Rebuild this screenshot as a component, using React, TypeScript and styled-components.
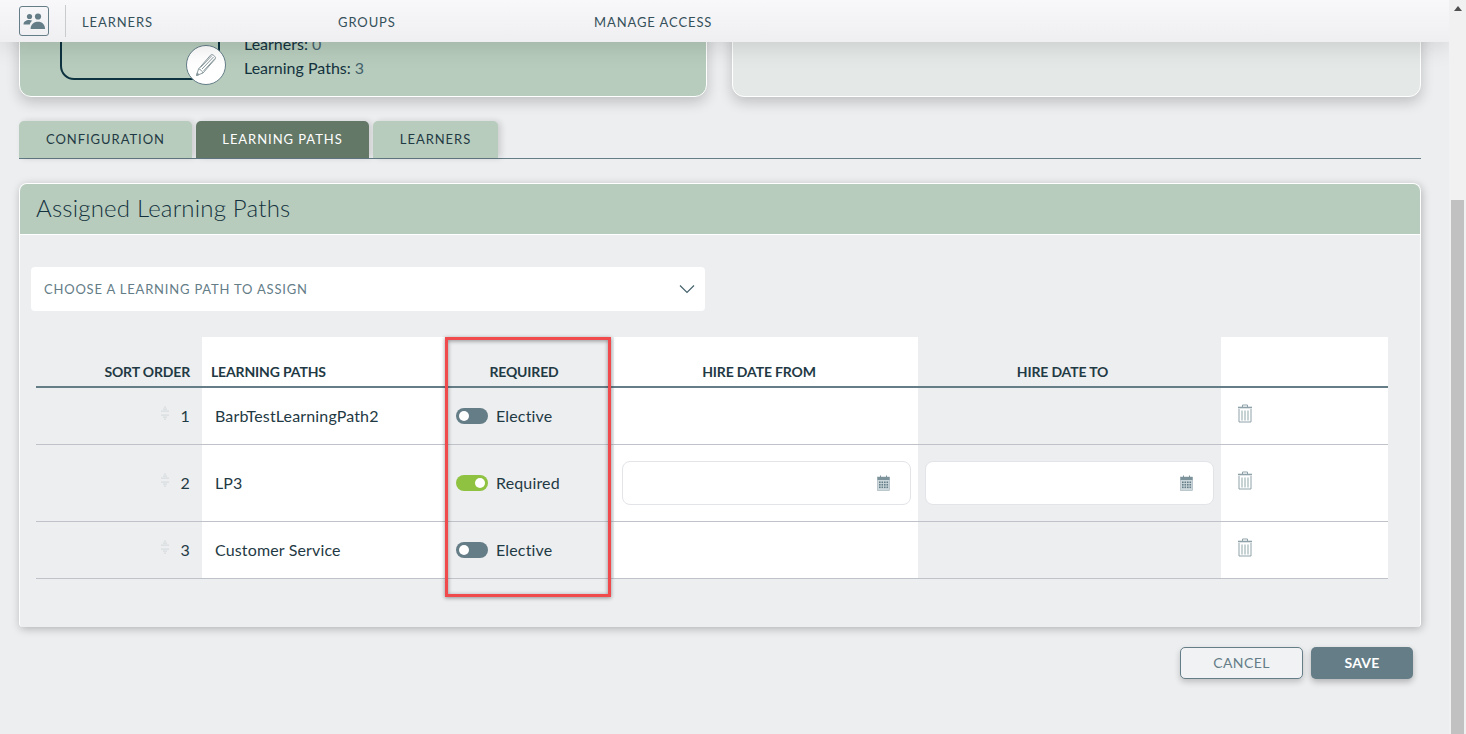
import * as React from 'react';
import styled, { createGlobalStyle } from 'styled-components';

const rows = [
  { id: 1, name: 'BarbTestLearningPath2', required: false },
  { id: 2, name: 'LP3', required: true },
  { id: 3, name: 'Customer Service', required: false },
];

function PeopleIcon() {
  return (
    <svg width="22" height="17" viewBox="0 0 22 17" fill="#647d87">
      <circle cx="6.5" cy="3.5" r="2.6" />
      <circle cx="15" cy="3.5" r="3.1" />
      <path d="M0.5 11.5c0-3 2.6-4.6 5.6-4.6 1.2 0 2.3.3 3.2.8-1.4 1-2.2 2.2-2.5 3.8z" />
      <path d="M7.6 16c0-4.6 3.2-7.2 7.4-7.2s7 2.6 7 7.2z" />
    </svg>
  );
}

function PencilIcon() {
  return (
    <svg width="22" height="24" viewBox="0 0 22 24" fill="none" stroke="#8a9a9f" strokeWidth="1">
      <path d="M1.5 22.5l2-6.5L15.5 2.2c.8-.9 1.9-.9 2.8-.1l1.5 1.3c.9.8 1 1.9.2 2.8L8 20z" />
      <path d="M3.5 16c1.8.2 3.5 1.7 4.5 4" />
      <path d="M5.5 14.5L17 2.5M7 16l11.5-12M8.5 18L20 5.5" />
      <path d="M1.5 22.5l2.5-.8-1.7-1.8z" fill="#8a9a9f" />
    </svg>
  );
}

function CalendarIcon() {
  return (
    <svg width="13" height="16" viewBox="0 0 13 16">
      <rect x="0.5" y="2" width="12" height="13.5" fill="#cdd8dc" stroke="#9fb0b6" strokeWidth="0.6" />
      <rect x="0.5" y="2" width="12" height="3" fill="#7d939c" />
      <rect x="3" y="0.5" width="1" height="3.5" fill="#7d939c" />
      <rect x="9" y="0.5" width="1" height="3.5" fill="#7d939c" />
      {[6.5, 9, 11.5].map(y =>
        [2, 4.5, 7, 9.5].map(x => (
          <rect key={`${x}-${y}`} x={x} y={y} width="1.6" height="1.6" fill="#647d87" />
        )),
      )}
    </svg>
  );
}

function TrashIcon() {
  return (
    <svg width="16" height="19" viewBox="0 0 16 19" fill="none" stroke="#8fa2a9">
      <path d="M5.5 3V1h5v2" />
      <path d="M1 3.5h14" strokeWidth="1.6" />
      <path d="M2 5v13h12V5" />
      <path d="M5 6.5v10M8 6.5v10M11 6.5v10" strokeWidth="1.5" stroke="#b5c3c8" />
    </svg>
  );
}

function DragIcon() {
  const dots = [
    [4, 1], [3, 3], [5, 3], [1, 5], [3, 5], [5, 5], [7, 5],
    [1, 9], [3, 9], [5, 9], [7, 9], [3, 11], [5, 11], [4, 13],
  ];
  return (
    <svg width="8" height="15" viewBox="0 0 8 15" fill="#b3bfc4">
      {dots.map(([x, y]) => (
        <circle key={`${x}-${y}`} cx={x} cy={y} r="0.6" />
      ))}
    </svg>
  );
}

function ChevronIcon() {
  return (
    <svg width="16" height="10" viewBox="0 0 16 10" fill="none" stroke="#46626c" strokeWidth="1.2">
      <path d="M1 1.5l7 7 7-7" />
    </svg>
  );
}

export default function App() {
  return (
    <>
      <GlobalStyle />
      <Shell>
        <Page>
          <Header>
            <IconBox>
              <PeopleIcon />
            </IconBox>
            <HeaderDivider />
            <NavItem>LEARNERS</NavItem>
            <NavItem>GROUPS</NavItem>
            <NavItem>MANAGE ACCESS</NavItem>
          </Header>
          <Main>
            <TopRow>
              <TopCard>
                <ImageFrame>
                  <EditBadge>
                    <PencilIcon />
                  </EditBadge>
                </ImageFrame>
                <Stats>
                  <StatLine>
                    Learners: <StatValue>0</StatValue>
                  </StatLine>
                  <StatLine>
                    Learning Paths: <StatValue>3</StatValue>
                  </StatLine>
                </Stats>
              </TopCard>
              <TopCard $muted />
            </TopRow>

            <Tabs>
              <Tab $width={173}>CONFIGURATION</Tab>
              <Tab $width={173} $active>
                LEARNING PATHS
              </Tab>
              <Tab $width={125}>LEARNERS</Tab>
            </Tabs>

            <Panel>
              <PanelHeader>Assigned Learning Paths</PanelHeader>
              <PanelBody>
                <SelectBox>
                  <span>CHOOSE A LEARNING PATH TO ASSIGN</span>
                  <ChevronIcon />
                </SelectBox>

                <TableWrap>
                  <Table>
                    <colgroup>
                      <col style={{ width: 166 }} />
                      <col style={{ width: 244 }} />
                      <col style={{ width: 168 }} />
                      <col style={{ width: 304 }} />
                      <col style={{ width: 303 }} />
                      <col style={{ width: 167 }} />
                    </colgroup>
                    <thead>
                      <tr>
                        <HeadCell $align="right">SORT ORDER</HeadCell>
                        <HeadCell $align="left">LEARNING PATHS</HeadCell>
                        <HeadCell $align="center" $pad={12}>
                          REQUIRED
                        </HeadCell>
                        <HeadCell $align="center">HIRE DATE FROM</HeadCell>
                        <HeadCell $align="center">HIRE DATE TO</HeadCell>
                        <HeadCell $align="left" />
                      </tr>
                    </thead>
                    <tbody>
                      {rows.map(row => (
                        <BodyRow key={row.id} $tall={row.required}>
                          <td>
                            <SortCell>
                              <DragIcon />
                              <CellText>{row.id}</CellText>
                            </SortCell>
                          </td>
                          <NameCell>
                            <CellText>{row.name}</CellText>
                          </NameCell>
                          <td>
                            <ToggleWrap>
                              <ToggleTrack $on={row.required}>
                                <ToggleKnob />
                              </ToggleTrack>
                              <CellText>{row.required ? 'Required' : 'Elective'}</CellText>
                            </ToggleWrap>
                          </td>
                          <DateCell>
                            {row.required && (
                              <DateInput>
                                <CalendarIcon />
                              </DateInput>
                            )}
                          </DateCell>
                          <DateCell $right>
                            {row.required && (
                              <DateInput>
                                <CalendarIcon />
                              </DateInput>
                            )}
                          </DateCell>
                          <ActionCell>
                            <TrashIcon />
                          </ActionCell>
                        </BodyRow>
                      ))}
                    </tbody>
                  </Table>
                  <Callout />
                </TableWrap>
              </PanelBody>
            </Panel>

            <Actions>
              <CancelButton>CANCEL</CancelButton>
              <SaveButton>SAVE</SaveButton>
            </Actions>
          </Main>
        </Page>
        <Scrollbar>
          <ScrollArrow />
          <ScrollThumb />
        </Scrollbar>
      </Shell>
    </>
  );
}

const GlobalStyle = createGlobalStyle`
  html, body {
    margin: 0;
    height: 100%;
    overflow: hidden;
    background: #edeef0;
    font-family: Lato, "Liberation Sans", sans-serif;
    color: #1f3a44;
  }
`;

const Shell = styled.div`
  display: flex;
  height: 734px;
  width: 1466px;
  overflow: hidden;
`;

const Page = styled.div`
  position: relative;
  width: 1449px;
  height: 734px;
  overflow: hidden;
`;

const Header = styled.header`
  position: absolute;
  top: 0;
  left: 0;
  right: 0;
  z-index: 5;
  height: 42px;
  display: flex;
  align-items: center;
  padding-left: 19px;
  box-sizing: border-box;
  background: linear-gradient(#f8f8fa, #efeff1);
  box-shadow: 0 4px 24px rgba(0, 0, 0, 0.12);
`;

const IconBox = styled.div`
  width: 30px;
  height: 30px;
  box-sizing: border-box;
  display: flex;
  align-items: center;
  justify-content: center;
  border: 1px solid #647d87;
  border-radius: 3px;
`;

const HeaderDivider = styled.div`
  width: 1px;
  height: 32px;
  margin: 0 16px;
  background: #c9cccf;
`;

const NavItem = styled.div`
  width: 256px;
  padding-top: 2px;
  font-size: 13px;
  letter-spacing: 0.9px;
  color: #34505a;
`;

const Main = styled.main`
  margin-top: -63px;
  padding: 0 28px 0 19px;
`;

const TopRow = styled.div`
  display: grid;
  grid-template-columns: 688px 689px;
  justify-content: space-between;
`;

const TopCard = styled.section<{ $muted?: boolean }>`
  height: 160px;
  box-sizing: border-box;
  display: flex;
  align-items: flex-end;
  padding: 0 0 16px 40px;
  border: 1px solid #fff;
  border-radius: 12px;
  background: ${p => (p.$muted ? '#e4e8e6' : '#b7ccbd')};
  box-shadow: 0 5px 14px rgba(0, 0, 0, 0.2);
`;

const ImageFrame = styled.div`
  position: relative;
  width: 160px;
  height: 120px;
  box-sizing: border-box;
  border: 2px solid #0d3240;
  border-radius: 14px;
`;

const EditBadge = styled.div`
  position: absolute;
  right: -8px;
  bottom: -7px;
  width: 40px;
  height: 40px;
  box-sizing: border-box;
  display: flex;
  align-items: center;
  justify-content: center;
  border: 1px solid #647d87;
  border-radius: 50%;
  background: #fff;
`;

const Stats = styled.div`
  margin-left: 24px;
  display: flex;
  flex-direction: column;
  gap: 6px;
  padding-bottom: 3px;
`;

const StatLine = styled.div`
  font-size: 16px;
  line-height: 18px;
  color: #14323e;
`;

const StatValue = styled.span`
  color: #46626c;
`;

const Tabs = styled.nav`
  display: flex;
  gap: 4px;
  margin-top: 24px;
  border-bottom: 1px solid #647d87;
`;

const Tab = styled.div<{ $width: number; $active?: boolean }>`
  width: ${p => p.$width}px;
  height: 37px;
  padding-bottom: 2px;
  box-sizing: border-box;
  display: flex;
  align-items: center;
  justify-content: center;
  font-size: 13px;
  letter-spacing: 0.95px;
  border-radius: 5px 5px 0 0;
  color: ${p => (p.$active ? '#fff' : '#1f3a44')};
  background: ${p => (p.$active ? '#647868' : '#b7ccbd')};
  box-shadow: 3px 0 6px rgba(0, 0, 0, 0.14);
`;

const Panel = styled.section`
  margin-top: 24px;
  height: 444px;
  box-sizing: border-box;
  border: 1px solid #fff;
  border-bottom: 0;
  border-radius: 8px 8px 4px 4px;
  overflow: hidden;
  background: #edeef0;
  box-shadow: 1px 2px 8px rgba(0, 0, 0, 0.25);
`;

const PanelHeader = styled.h2`
  margin: 0;
  height: 51px;
  box-sizing: border-box;
  display: flex;
  align-items: center;
  padding: 0 0 4px 16px;
  font-size: 24px;
  font-weight: 300;
  letter-spacing: 0.2px;
  color: #14323e;
  background: #b7ccbd;
  border-bottom: 1px solid #fff;
`;

const PanelBody = styled.div`
  padding: 32px 16px 0 11px;
`;

const SelectBox = styled.div`
  width: 674px;
  height: 44px;
  box-sizing: border-box;
  display: flex;
  align-items: center;
  justify-content: space-between;
  padding: 0 10px 0 13px;
  border-radius: 4px;
  background: #fff;
  font-size: 13px;
  letter-spacing: 0.8px;
  color: #647d87;
`;

const TableWrap = styled.div`
  position: relative;
  margin: 26px 0 0 5px;
  width: 1352px;
`;

const Table = styled.table`
  width: 1352px;
  table-layout: fixed;
  border-collapse: separate;
  border-spacing: 0;
  font-size: 16px;
  letter-spacing: 0.15px;

  td:nth-child(2),
  th:nth-child(2),
  td:nth-child(4),
  th:nth-child(4),
  td:nth-child(6),
  th:nth-child(6) {
    background: #fff;
  }
`;

const HeadCell = styled.th<{ $align: string; $pad?: number }>`
  height: 51px;
  box-sizing: border-box;
  padding: 0 ${p => (p.$pad ? p.$pad : p.$align === 'right' ? 12 : p.$align === 'center' ? 14 : 0)}px 5px
    ${p => (p.$align === 'left' ? '9px' : '0')};
  text-align: ${p => p.$align};
  vertical-align: bottom;
  font-size: 14px;
  font-weight: 700;
  letter-spacing: -0.15px;
  line-height: 18px;
  color: #1f3a44;
  border-bottom: 2px solid #647d87;
`;

const BodyRow = styled.tr<{ $tall?: boolean }>`
  height: ${p => (p.$tall ? 77 : 57)}px;

  td {
    padding: 0;
    box-sizing: border-box;
    border-bottom: 1px solid #c0c2c9;
    vertical-align: middle;
  }
`;

const CellText = styled.span`
  display: inline-block;
  transform: translateY(-1px);
`;

const SortCell = styled.div`
  display: flex;
  justify-content: flex-end;
  align-items: center;
  gap: 12px;
  padding-right: 12px;

  svg {
    margin-top: -5px;
  }
`;

const NameCell = styled.td`
  && {
    padding-left: 13px;
  }
`;

const ToggleWrap = styled.div`
  display: flex;
  align-items: center;
  gap: 8px;
  padding-left: 10px;
`;

const ToggleTrack = styled.div<{ $on: boolean }>`
  width: 32px;
  height: 16px;
  box-sizing: border-box;
  display: flex;
  align-items: center;
  justify-content: ${p => (p.$on ? 'flex-end' : 'flex-start')};
  padding: 0 3px;
  border-radius: 8px;
  background: ${p => (p.$on ? '#8fc241' : '#647d87')};
`;

const ToggleKnob = styled.div`
  width: 10px;
  height: 10px;
  border-radius: 50%;
  background: #fff;
`;

const DateCell = styled.td<{ $right?: boolean }>`
  && {
    padding: 0 7px 0 ${p => (p.$right ? '7px' : '8px')};
  }
`;

const DateInput = styled.div`
  height: 44px;
  box-sizing: border-box;
  display: flex;
  align-items: center;
  justify-content: flex-end;
  padding-right: 20px;
  border: 1px solid #e2e4e8;
  border-radius: 8px;
  background: #fff;
`;

const ActionCell = styled.td`
  && {
    padding-left: 16px;
  }

  svg {
    display: block;
    margin-top: -5px;
  }
`;

const Callout = styled.div`
  position: absolute;
  left: 409px;
  top: 0;
  width: 166px;
  height: 260px;
  box-sizing: border-box;
  border: 3px solid #f04a4c;
  box-shadow: 0 1px 4px rgba(0, 0, 0, 0.4), inset 0 1px 4px rgba(0, 0, 0, 0.4);
  pointer-events: none;
`;

const Actions = styled.div`
  display: flex;
  justify-content: flex-end;
  gap: 8px;
  margin-top: 20px;
  padding-right: 8px;
`;

const CancelButton = styled.button`
  width: 123px;
  height: 32px;
  padding: 0 0 2px;
  border: 1px solid #647d87;
  border-radius: 5px;
  background: #f1f2f4;
  font: 14px Lato, "Liberation Sans", sans-serif;
  letter-spacing: 0.4px;
  color: #647d87;
  box-shadow: 0 3px 6px rgba(0, 0, 0, 0.2);
`;

const SaveButton = styled.button`
  width: 102px;
  height: 32px;
  padding: 0 0 2px;
  border: 0;
  border-radius: 5px;
  background: #647d87;
  font: 700 14px Lato, "Liberation Sans", sans-serif;
  letter-spacing: 0.2px;
  color: #fff;
  box-shadow: 0 3px 6px rgba(0, 0, 0, 0.25);
`;

const Scrollbar = styled.div`
  width: 17px;
  height: 734px;
  display: flex;
  flex-direction: column;
  align-items: center;
  background: #f1f1f1;
`;

const ScrollArrow = styled.div`
  margin-top: 6px;
  width: 0;
  height: 0;
  border-left: 4px solid transparent;
  border-right: 4px solid transparent;
  border-bottom: 5px solid #505050;
`;

const ScrollThumb = styled.div`
  margin-top: 189px;
  width: 13px;
  flex: 1;
  background: #c1c1c1;
`;
